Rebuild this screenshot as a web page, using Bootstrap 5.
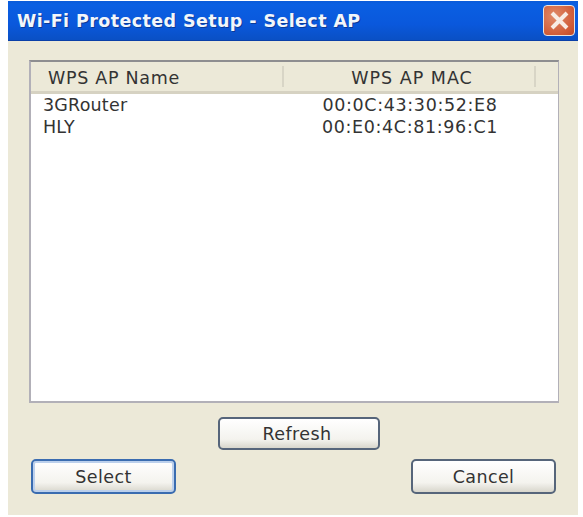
<!DOCTYPE html>
<html lang="en">
<head>
<meta charset="utf-8">
<title>Wi-Fi Protected Setup - Select AP</title>
<link rel="stylesheet" href="https://cdn.jsdelivr.net/npm/bootstrap@5.3.0/dist/css/bootstrap.min.css">
<style>
html, body { background: #fff; height: 517px; overflow: hidden; }
body { padding: 1px 5px 2px 8px; font-family: "DejaVu Sans", "Liberation Sans", sans-serif; font-size: 17.5px; color: #333; }
.xp-window { height: 514px; background: #ece9d8; }
.xp-title { height: 40px; padding-left: 9px; padding-right: 3px; color: #f2f6fb; font-family: "DejaVu Sans", sans-serif; font-weight: 700; font-size: 17.5px; letter-spacing: .4px;
  background: linear-gradient(#0a5ad8 0, #0a5fe2 8%, #0a58dc 60%, #0a50c4 100%); border-bottom: 1px solid #0a3fa8; text-shadow: 1px 1px 0 #0b3a98; }
.xp-title-text { padding-top: 2px; }
.xp-close { width: 32px; height: 31px; border: 1px solid #e8e4e0; border-radius: 4px; background: radial-gradient(circle at 35% 35%, #e08a68, #d05c38 70%, #c04a28); padding: 0; }
.xp-body { padding: 19px 19px 19px 21px; }
.xp-list { height: 343px; background: #fff; border: 2px solid #b2b0b8; border-top-color: #8e8e90; border-right-width: 1px; }
.xp-head { height: 32px; background: #ece9d8; border-bottom: 3px solid #d6d2c2; letter-spacing: .7px; }
.xp-col-a { width: 253px; padding-left: 17px; padding-top: 2px; border-right: 2px solid #d8d5c6; margin: 4px 0; line-height: 21px; }
.xp-col-b { width: 252px; padding-top: 2px; padding-left: 6px; border-right: 2px solid #d8d5c6; margin: 4px 0; line-height: 21px; text-align: center; letter-spacing: 1px; }
.xp-row { height: 22px; line-height: 22px; }
.xp-row-a { width: 253px; padding-left: 12px; letter-spacing: .2px; }
.xp-row-b { width: 252px; text-align: center; letter-spacing: .65px; }
.xp-btn { padding: 2px 0 0; font-size: 17.5px; letter-spacing: .4px; line-height: 1; color: #333; border: 2px solid #56657a; border-radius: 5px; background: linear-gradient(#fff 0, #f4f3ee 70%, #d8d6cc 100%); }
.xp-btn:hover, .xp-btn:active { color: #333; border-color: #56657a; }
.xp-refresh { width: 162px; height: 33px; padding-right: 3px; }
.xp-main { width: 145px; height: 35px; }
.xp-default { border-color: #3a6cb0; box-shadow: inset 0 0 0 2px #bcd0ec; }
.xp-mid { padding-top: 14px; padding-left: 9px; }
.xp-bottom { padding-top: 9px; padding-left: 2px; padding-right: 3px; }
</style>
</head>
<body>
<div class="xp-window d-flex flex-column">
  <div class="xp-title d-flex align-items-center justify-content-between">
    <span class="xp-title-text">Wi-Fi Protected Setup - Select AP</span>
    <button type="button" class="xp-close d-flex align-items-center justify-content-center" aria-label="Close">
      <svg width="21" height="19" viewBox="0 0 21 19"><path d="M3 2L18 17M18 2L3 17" stroke="#f8ece4" stroke-width="4" fill="none"/></svg>
    </button>
  </div>
  <div class="xp-body">
    <div class="xp-list">
      <div class="xp-head d-flex">
        <div class="xp-col-a">WPS AP Name</div>
        <div class="xp-col-b">WPS AP MAC</div>
      </div>
      <div class="xp-row d-flex"><div class="xp-row-a">3GRouter</div><div class="xp-row-b">00:0C:43:30:52:E8</div></div>
      <div class="xp-row d-flex"><div class="xp-row-a">HLY</div><div class="xp-row-b">00:E0:4C:81:96:C1</div></div>
    </div>
    <div class="xp-mid d-flex justify-content-center">
      <button type="button" class="btn xp-btn xp-refresh">Refresh</button>
    </div>
    <div class="xp-bottom d-flex justify-content-between">
      <button type="button" class="btn xp-btn xp-main xp-default">Select</button>
      <button type="button" class="btn xp-btn xp-main">Cancel</button>
    </div>
  </div>
</div>
<script src="https://cdn.jsdelivr.net/npm/bootstrap@5.3.0/dist/js/bootstrap.bundle.min.js"></script>
</body>
</html>
